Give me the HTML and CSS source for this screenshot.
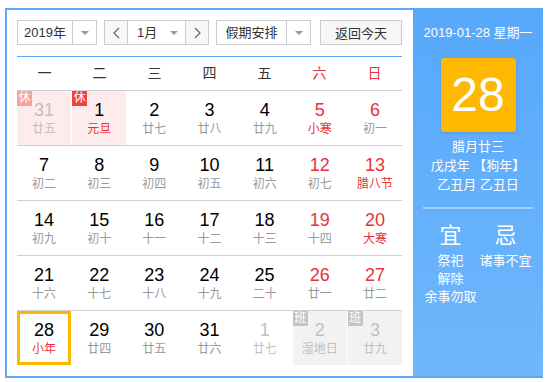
FILE: index.html
```html
<!DOCTYPE html>
<html lang="zh-CN">
<head>
  <meta charset="UTF-8" />
  <meta name="viewport" content="width=device-width, initial-scale=1.0" />
  <title>万年历</title>
  <link rel="stylesheet" href="styles.css">
</head>
<body>

  <!-- Calendar widget -->
  <div class="calendar">

    <!-- Left: toolbar and month grid -->
    <div class="main">
      <div class="toolbar">
        <div class="select year-select">
          <span class="select-value">2019年</span>
          <span class="select-arrow"><i class="caret"></i></span>
        </div>

        <div class="month-group">
          <span class="nav prev">
            <svg width="7" height="12" viewBox="0 0 7 12"><polyline points="6,1 1,6 6,11" fill="none" stroke="#666" stroke-width="1.2" /></svg>
          </span>
          <span class="month-value">1月<i class="caret"></i></span>
          <span class="nav next">
            <svg width="7" height="12" viewBox="0 0 7 12"><polyline points="1,1 6,6 1,11" fill="none" stroke="#666" stroke-width="1.2" /></svg>
          </span>
        </div>

        <div class="select holiday-select">
          <span class="select-value">假期安排</span>
          <span class="select-arrow"><i class="caret"></i></span>
        </div>

        <button class="today-btn">返回今天</button>
      </div>

      <!-- Weekday names -->
      <div class="weekdays">
        <span>一</span><span>二</span><span>三</span><span>四</span><span>五</span>
        <span class="red">六</span><span class="red">日</span>
      </div>

      <!-- Weeks -->
      <div class="week">
        <div class="day other rest"><span class="badge">休</span><div class="num">31</div><div class="lunar">廿五</div></div>
        <div class="day rest"><span class="badge">休</span><div class="num">1</div><div class="lunar fest">元旦</div></div>
        <div class="day"><div class="num">2</div><div class="lunar">廿七</div></div>
        <div class="day"><div class="num">3</div><div class="lunar">廿八</div></div>
        <div class="day"><div class="num">4</div><div class="lunar">廿九</div></div>
        <div class="day weekend"><div class="num">5</div><div class="lunar fest">小寒</div></div>
        <div class="day weekend"><div class="num">6</div><div class="lunar">初一</div></div>
      </div>

      <div class="week">
        <div class="day"><div class="num">7</div><div class="lunar">初二</div></div>
        <div class="day"><div class="num">8</div><div class="lunar">初三</div></div>
        <div class="day"><div class="num">9</div><div class="lunar">初四</div></div>
        <div class="day"><div class="num">10</div><div class="lunar">初五</div></div>
        <div class="day"><div class="num">11</div><div class="lunar">初六</div></div>
        <div class="day weekend"><div class="num">12</div><div class="lunar">初七</div></div>
        <div class="day weekend"><div class="num">13</div><div class="lunar fest">腊八节</div></div>
      </div>

      <div class="week">
        <div class="day"><div class="num">14</div><div class="lunar">初九</div></div>
        <div class="day"><div class="num">15</div><div class="lunar">初十</div></div>
        <div class="day"><div class="num">16</div><div class="lunar">十一</div></div>
        <div class="day"><div class="num">17</div><div class="lunar">十二</div></div>
        <div class="day"><div class="num">18</div><div class="lunar">十三</div></div>
        <div class="day weekend"><div class="num">19</div><div class="lunar">十四</div></div>
        <div class="day weekend"><div class="num">20</div><div class="lunar fest">大寒</div></div>
      </div>

      <div class="week">
        <div class="day"><div class="num">21</div><div class="lunar">十六</div></div>
        <div class="day"><div class="num">22</div><div class="lunar">十七</div></div>
        <div class="day"><div class="num">23</div><div class="lunar">十八</div></div>
        <div class="day"><div class="num">24</div><div class="lunar">十九</div></div>
        <div class="day"><div class="num">25</div><div class="lunar">二十</div></div>
        <div class="day weekend"><div class="num">26</div><div class="lunar">廿一</div></div>
        <div class="day weekend"><div class="num">27</div><div class="lunar">廿二</div></div>
      </div>

      <div class="week">
        <div class="day today"><div class="num">28</div><div class="lunar fest">小年</div></div>
        <div class="day"><div class="num">29</div><div class="lunar">廿四</div></div>
        <div class="day"><div class="num">30</div><div class="lunar">廿五</div></div>
        <div class="day"><div class="num">31</div><div class="lunar">廿六</div></div>
        <div class="day other"><div class="num">1</div><div class="lunar">廿七</div></div>
        <div class="day other work"><span class="badge">班</span><div class="num">2</div><div class="lunar">湿地日</div></div>
        <div class="day other work"><span class="badge">班</span><div class="num">3</div><div class="lunar">廿九</div></div>
      </div>
    </div>

    <!-- Right: selected day details -->
    <div class="side">
      <div class="side-date">2019-01-28 星期一</div>
      <div class="big-day">28</div>
      <div class="side-line">腊月廿三</div>
      <div class="side-line">戊戌年 【狗年】</div>
      <div class="side-line">乙丑月 乙丑日</div>
      <div class="side-divider"></div>
      <div class="advice">
        <div class="advice-col">
          <div class="advice-title">宜</div>
          <div class="advice-item">祭祀</div>
          <div class="advice-item">解除</div>
          <div class="advice-item">余事勿取</div>
        </div>
        <div class="advice-col">
          <div class="advice-title">忌</div>
          <div class="advice-item">诸事不宜</div>
        </div>
      </div>
    </div>
  </div>

</body>
</html>
```

FILE: styles.css
```css
/* Page */
body {
  margin: 0;
  font-family: "Liberation Sans", Arial, "Noto Sans CJK SC", sans-serif;
  background-color: #ffffff;
  color: #333;
}

/* Outer frame */
.calendar {
  display: flex;
  width: 538px;
  height: 370px;
  margin: 8px 0 0 5px;
  border: 2px solid #5aa9f9;
  border-right: none;
  box-sizing: border-box;
}

.main {
  width: 406px;
  padding: 10px 11px 0 10px;
  box-sizing: border-box;
}

/* Toolbar */
.toolbar {
  display: flex;
  gap: 7px;
  height: 25px;
  padding-bottom: 11px;
  border-bottom: 1px solid #5aa9f9;
}

.select,
.month-group {
  display: flex;
  height: 25px;
  border: 1px solid #ccc;
  box-sizing: border-box;
  font-size: 13px;
  line-height: 23px;
}

.select-value {
  flex: 1;
  text-align: center;
}

.select-arrow {
  width: 23px;
  border-left: 1px solid #ccc;
  display: flex;
  align-items: center;
  justify-content: center;
}

.caret {
  display: inline-block;
  width: 0;
  height: 0;
  border-left: 4px solid transparent;
  border-right: 4px solid transparent;
  border-top: 4px solid #999;
}

.year-select {
  width: 80px;
}

.holiday-select {
  width: 95px;
}

.month-group {
  width: 105px;
}

.nav {
  width: 22px;
  background-color: #f7f7f7;
  display: flex;
  align-items: center;
  justify-content: center;
}

.prev {
  border-right: 1px solid #ccc;
}

.next {
  border-left: 1px solid #ccc;
}

.month-value {
  flex: 1;
  display: flex;
  align-items: center;
  justify-content: space-between;
  padding: 0 7px 0 9px;
}

.today-btn {
  margin-left: auto;
  width: 82px;
  height: 25px;
  border: 1px solid #ccc;
  background-color: #f6f6f6;
  font-family: inherit;
  font-size: 13px;
  color: #333;
  padding: 0;
}

/* Weekday header */
.weekdays {
  display: grid;
  grid-template-columns: repeat(7, 1fr);
  height: 33px;
  line-height: 33px;
  text-align: center;
  font-size: 14px;
  color: #333;
}

.weekdays .red {
  color: #e8313b;
}

/* Week rows */
.week {
  display: grid;
  grid-template-columns: repeat(7, 1fr);
  column-gap: 1px;
  height: 55px;
  border-top: 1px solid #d0d0d0;
  box-sizing: border-box;
}

.day {
  position: relative;
  text-align: center;
  padding-top: 8px;
  box-sizing: border-box;
}

.num {
  font-size: 18px;
  line-height: 22px;
  color: #000;
}

.lunar {
  font-size: 12px;
  line-height: 16px;
  color: #999;
}

.weekend .num {
  color: #e8313b;
}

.fest {
  color: #e8313b;
}

.rest {
  background-color: #fdeceb;
}

.work {
  background-color: #f2f2f2;
}

.other .num,
.other .lunar {
  color: #c0c0c0;
}

/* Holiday / workday tags */
.badge {
  position: absolute;
  top: 0;
  left: 0;
  width: 15px;
  height: 15px;
  font-size: 12px;
  line-height: 15px;
  color: #fff;
  background-color: #f2403a;
}

.other .badge {
  background-color: #f7a09c;
}

.work .badge {
  background-color: #c4c4c4;
}

.today {
  border: 3px solid #fbb800;
  padding-top: 5px;
}

/* Right panel */
.side {
  width: 130px;
  background: linear-gradient(#57a8fb, #6fb7fc);
  color: #fff;
  text-align: center;
  padding-top: 14px;
  box-sizing: border-box;
}

.side-date {
  font-size: 13px;
  line-height: 18px;
}

.big-day {
  width: 75px;
  height: 74px;
  margin: 16px auto 5px;
  background-color: #ffb800;
  border-radius: 3px;
  box-shadow: 0 1px 3px rgba(0, 0, 0, 0.15);
  font-size: 48px;
  line-height: 74px;
}

.side-line {
  font-size: 13px;
  line-height: 19px;
}

.side-divider {
  height: 2px;
  margin: 13px 10px 0;
  background-color: rgba(255, 255, 255, 0.4);
}

.advice {
  display: flex;
  margin: 14px 10px 0;
}

.advice-col {
  flex: 1;
}

.advice-title {
  font-size: 22px;
  line-height: 26px;
  margin-bottom: 3px;
}

.advice-item {
  font-size: 13px;
  line-height: 18px;
  white-space: nowrap;
}
```
